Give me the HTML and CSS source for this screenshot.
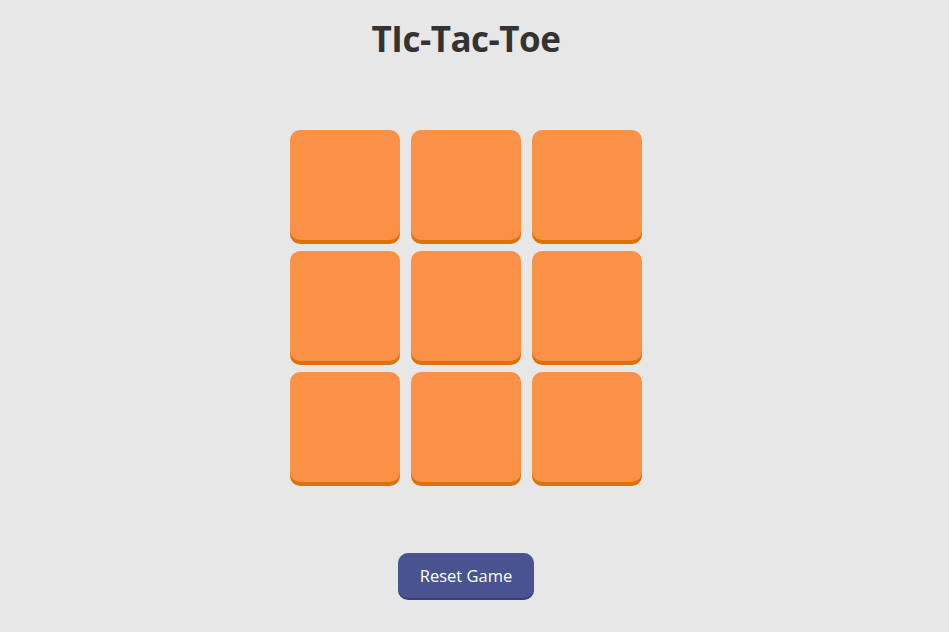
FILE: index.html
```html
<!DOCTYPE html>
<html lang="en">
<head>
<meta charset="utf-8">
<title>Tic-Tac-Toe</title>
<link rel="stylesheet" href="styles.css">
</head>
<body>
<main class="game">
  <h1 class="title">TIc-Tac-Toe</h1>
  <div class="board">
    <div class="cell"></div>
    <div class="cell"></div>
    <div class="cell"></div>
    <div class="cell"></div>
    <div class="cell"></div>
    <div class="cell"></div>
    <div class="cell"></div>
    <div class="cell"></div>
    <div class="cell"></div>
  </div>
  <button class="reset">Reset Game</button>
</main>
</body>
</html>
```
FILE: styles.css
```css
html, body {
  margin: 0;
  padding: 0;
  background: #e7e7e7;
  height: 100%;
}
.game {
  display: flex;
  flex-direction: column;
  align-items: center;
  padding-right: 17px;
  font-family: "Open Sans", "Noto Sans", sans-serif;
}
.title {
  margin: 17px 0 0;
  font-size: 35px;
  line-height: 44px;
  font-weight: 700;
  color: #333333;
  letter-spacing: -0.5px;
}
.board {
  margin-top: 69px;
  display: grid;
  grid-template-columns: repeat(3, 110px);
  grid-auto-rows: 110px;
  column-gap: 11px;
  row-gap: 11px;
}
.cell {
  background: #fa9146;
  border-radius: 10px;
  box-shadow: 0 4px 0 #dc7308;
}
.reset {
  margin-top: 71px;
  width: 136px;
  height: 45px;
  border: none;
  border-radius: 10px;
  background: #48538f;
  box-shadow: 0 2px 0 #36407a;
  color: #ffffff;
  font-family: "Open Sans", "Noto Sans", sans-serif;
  font-size: 16.5px;
  cursor: pointer;
}
```
